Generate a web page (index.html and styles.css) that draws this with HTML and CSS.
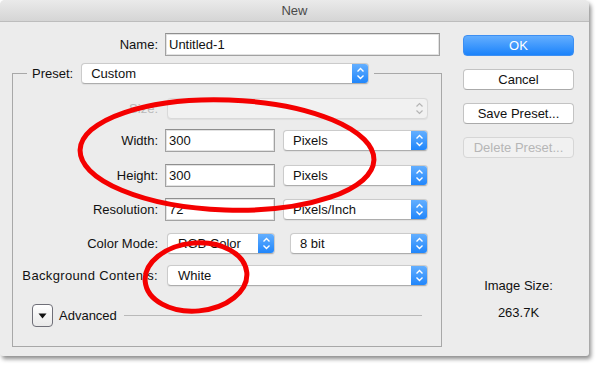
FILE: index.html
```html
<!DOCTYPE html>
<html>
<head>
<meta charset="utf-8">
<link rel="stylesheet" href="styles.css">
</head>
<body>
<div class="window">
  <div class="titlebar">New</div>
  <div class="content">
    <div class="main">
      <div class="row name-row">
        <span class="label">Name:</span>
        <div class="input name-input">Untitled-1</div>
      </div>
      <fieldset class="preset">
        <legend class="legend">
          <span class="legend-label">Preset:</span>
          <div class="popup w-preset"><span class="val">Custom</span><span class="arrow"><svg width="9" height="13" viewBox="0 0 9 13"><path d="M1.5 4.5 L4.5 1.5 L7.5 4.5 M1.5 8.5 L4.5 11.5 L7.5 8.5" fill="none" stroke="#fff" stroke-width="1.4"/></svg></span></div>
        </legend>
        <div class="row r-size">
          <span class="label disabled">Size:</span>
          <div class="popup popup-disabled w-long sel-indent"><span class="val"></span><span class="arrow arrow-gray"><svg width="9" height="13" viewBox="0 0 9 13"><path d="M1.5 4.5 L4.5 1.5 L7.5 4.5 M1.5 8.5 L4.5 11.5 L7.5 8.5" fill="none" stroke="#b5b5b5" stroke-width="1.2"/></svg></span></div>
        </div>
        <div class="row r-width">
          <span class="label">Width:</span>
          <div class="input num-input">300</div>
          <div class="popup w-unit after-input"><span class="val">Pixels</span><span class="arrow"><svg width="9" height="13" viewBox="0 0 9 13"><path d="M1.5 4.5 L4.5 1.5 L7.5 4.5 M1.5 8.5 L4.5 11.5 L7.5 8.5" fill="none" stroke="#fff" stroke-width="1.4"/></svg></span></div>
        </div>
        <div class="row r-height">
          <span class="label">Height:</span>
          <div class="input num-input">300</div>
          <div class="popup w-unit after-input"><span class="val">Pixels</span><span class="arrow"><svg width="9" height="13" viewBox="0 0 9 13"><path d="M1.5 4.5 L4.5 1.5 L7.5 4.5 M1.5 8.5 L4.5 11.5 L7.5 8.5" fill="none" stroke="#fff" stroke-width="1.4"/></svg></span></div>
        </div>
        <div class="row r-std">
          <span class="label">Resolution:</span>
          <div class="input num-input">72</div>
          <div class="popup w-unit after-input"><span class="val">Pixels/Inch</span><span class="arrow"><svg width="9" height="13" viewBox="0 0 9 13"><path d="M1.5 4.5 L4.5 1.5 L7.5 4.5 M1.5 8.5 L4.5 11.5 L7.5 8.5" fill="none" stroke="#fff" stroke-width="1.4"/></svg></span></div>
        </div>
        <div class="row r-std">
          <span class="label">Color Mode:</span>
          <div class="popup w-mode sel-indent"><span class="val">RGB Color</span><span class="arrow"><svg width="9" height="13" viewBox="0 0 9 13"><path d="M1.5 4.5 L4.5 1.5 L7.5 4.5 M1.5 8.5 L4.5 11.5 L7.5 8.5" fill="none" stroke="#fff" stroke-width="1.4"/></svg></span></div>
          <div class="popup w-bits after-mode"><span class="val">8 bit</span><span class="arrow"><svg width="9" height="13" viewBox="0 0 9 13"><path d="M1.5 4.5 L4.5 1.5 L7.5 4.5 M1.5 8.5 L4.5 11.5 L7.5 8.5" fill="none" stroke="#fff" stroke-width="1.4"/></svg></span></div>
        </div>
        <div class="row r-bg">
          <span class="label label-bg">Background Contents:</span>
          <div class="popup w-long sel-indent"><span class="val">White</span><span class="arrow"><svg width="9" height="13" viewBox="0 0 9 13"><path d="M1.5 4.5 L4.5 1.5 L7.5 4.5 M1.5 8.5 L4.5 11.5 L7.5 8.5" fill="none" stroke="#fff" stroke-width="1.4"/></svg></span></div>
        </div>
        <div class="adv-row">
          <span class="disclosure"><svg width="9" height="6" viewBox="0 0 9 6"><path d="M0.5 0.5 L8.5 0.5 L4.5 5.5 Z" fill="#111"/></svg></span>
          <span class="adv-label">Advanced</span>
          <span class="adv-line"></span>
        </div>
      </fieldset>
    </div>
    <div class="side">
      <div class="btn btn-default">OK</div>
      <div class="btn">Cancel</div>
      <div class="btn">Save Preset...</div>
      <div class="btn btn-disabled">Delete Preset...</div>
      <div class="size-title">Image Size:</div>
      <div class="size-value">263.7K</div>
    </div>
  </div>
  <svg class="marks" width="597" height="366" viewBox="0 0 597 366">
    <ellipse cx="227" cy="155" rx="147" ry="55" transform="rotate(2 227 155)" fill="none" stroke="#f40000" stroke-width="5"/>
    <ellipse cx="196" cy="277" rx="51" ry="34" transform="rotate(-5 196 277)" fill="none" stroke="#f40000" stroke-width="5"/>
  </svg>
</div>
</body>
</html>
```
FILE: styles.css
```css
* { box-sizing: border-box; }
html, body {
  margin: 0;
  padding: 0;
  background: #ffffff;
}
body {
  font-family: "Liberation Sans", Arial, sans-serif;
  font-size: 13px;
  color: #111111;
  width: 597px;
  height: 366px;
  overflow: hidden;
}
.window {
  position: relative;
  width: 589px;
  height: 356px;
  background: #ececec;
  border-radius: 5px 5px 3px 3px;
  box-shadow: 2px 3px 4px rgba(0, 0, 0, 0.45);
}
.titlebar {
  height: 22px;
  line-height: 22px;
  text-align: center;
  color: #4a4a4a;
  background: linear-gradient(#eaeaea, #d5d5d5);
  border-bottom: 1px solid #bdbdbd;
  border-radius: 5px 5px 0 0;
}
.content {
  display: flex;
}
.main {
  width: 430px;
  margin-left: 12px;
}
.row {
  display: flex;
  align-items: center;
  height: 23px;
}
.name-row {
  margin-top: 11px;
}
.label {
  width: 146px;
  text-align: right;
  margin-right: 7px;
  white-space: nowrap;
}
.preset .label {
  width: 145px;
}
.label-bg { letter-spacing: 0.35px; }
.label.disabled { color: #b9b9b9; }
.input {
  height: 23px;
  line-height: 21px;
  background: #fff;
  border: 1px solid #a2a2a2;
  border-top-color: #8f8f8f;
  box-shadow: inset 0 0 0 1px #e2e2e2;
  padding-left: 3px;
  white-space: nowrap;
}
.name-input { width: 275px; }
.num-input { width: 110px; }

.preset {
  margin: 7px 0 0 0;
  padding: 13px 0 0 0;
  width: 430px;
  height: 284px;
  border: 1px solid #a8a8a8;
  min-width: 0;
}
.legend {
  display: flex;
  align-items: center;
  margin-left: 14px;
  padding: 0 5px;
  height: 21px;
}
.legend-label {
  margin-right: 8px;
}
.popup {
  display: flex;
  align-items: stretch;
  height: 21px;
  background: #fff;
  border: 1px solid #cbcbcb;
  border-bottom-color: #adadad;
  border-radius: 4px;
  box-shadow: 0 0.5px 1px rgba(0, 0, 0, 0.06);
  overflow: hidden;
}
.popup .val {
  flex: 1;
  line-height: 19px;
  padding-left: 9px;
  white-space: nowrap;
  overflow: hidden;
}
.popup .arrow {
  width: 17px;
  display: flex;
  align-items: center;
  justify-content: center;
  background: linear-gradient(#67b1ff, #1d84fb);
  margin: -1px -1px -1px 0;
}
.popup .arrow-gray {
  background: transparent;
}
.popup-disabled {
  background: #f1f1f1;
  border-color: #d9d9d9;
}
.w-preset { width: 288px; }
.w-long { width: 261px; }
.w-unit { width: 145px; }
.w-mode { width: 108px; }
.w-bits { width: 138px; }
.sel-indent { margin-left: 2px; }
.after-input { margin-left: 8px; }
.after-mode { margin-left: 15px; }
.w-long .val, .w-mode .val { padding-left: 10px; }

.r-size { margin-top: 0; }
.r-width { margin-top: 9px; }
.r-height { margin-top: 12px; }
.r-std { margin-top: 11px; }
.r-bg { margin-top: 9px; }

.adv-row {
  display: flex;
  align-items: center;
  height: 23px;
  margin-top: 17px;
  margin-left: 19px;
  margin-right: 19px;
}
.disclosure {
  width: 21px;
  height: 23px;
  display: flex;
  align-items: center;
  justify-content: center;
  border: 1px solid #6f6f78;
  border-radius: 4px;
  background: linear-gradient(#ffffff, #e9e9e9);
}
.adv-label {
  margin-left: 6px;
}
.adv-line {
  flex: 1;
  height: 1px;
  background: #b9b9b9;
  margin-left: 7px;
}

.side {
  width: 111px;
  margin-left: 21px;
  display: flex;
  flex-direction: column;
  padding-top: 13px;
}
.btn {
  height: 21px;
  line-height: 19px;
  text-align: center;
  background: #fff;
  border: 1px solid #c3c3c3;
  border-bottom-color: #aaaaaa;
  border-radius: 4px;
  margin-bottom: 13px;
  white-space: nowrap;
}
.btn-default {
  background: linear-gradient(#64aefe, #1b83fb);
  border-color: #3d8ff2;
  color: #fff;
}
.btn-disabled {
  background: #f1f1f1;
  border-color: #d6d6d6;
  color: #b6b6b6;
}
.size-title {
  text-align: center;
  margin-top: 107px;
  line-height: 16px;
}
.size-value {
  text-align: center;
  margin-top: 11px;
  line-height: 16px;
}
.marks {
  position: absolute;
  left: 0;
  top: 0;
  pointer-events: none;
}
```
